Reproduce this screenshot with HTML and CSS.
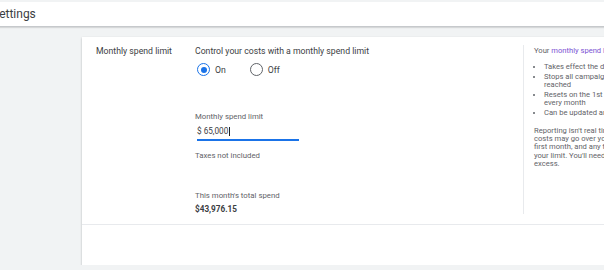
FILE: index.html
```html
<!DOCTYPE html>
<html lang="en">
<head>
    <meta charset="UTF-8">
    <meta name="viewport" content="width=device-width, initial-scale=1.0">
    <title>Settings</title>
    <link rel="stylesheet" href="styles.css">
</head>
<body>
    <header class="topbar">
        <h1 class="page-title">Settings</h1>
    </header>

    <main class="card">
        <section class="setting-row">
            <div class="setting-label">Monthly spend limit</div>

            <div class="setting-body">
                <p class="setting-desc">Control your costs with a monthly spend limit</p>

                <div class="radio-group">
                    <label class="radio-option"><span class="radio checked"></span>On</label>
                    <label class="radio-option"><span class="radio"></span>Off</label>
                </div>

                <div class="field">
                    <div class="field-label">Monthly spend limit</div>
                    <div class="field-input">$ 65,000<span class="caret"></span></div>
                </div>

                <p class="hint">Taxes not included</p>

                <div class="spend-label">This month's total spend</div>
                <div class="spend-value">$43,976.15</div>
            </div>

            <aside class="setting-help">
                <p class="help-title">Your <a class="help-link">monthly spend limit</a>:</p>
                <ul class="help-list">
                    <li>Takes effect the day you set it</li>
                    <li>Stops all campaigns when it's<br>reached</li>
                    <li>Resets on the 1st day of<br>every month</li>
                    <li>Can be updated anytime</li>
                </ul>
                <p class="help-note">Reporting isn't real time, so your<br>costs may go over your limit in your<br>first month, and any time you lower<br>your limit. You'll need to pay for the<br>excess.</p>
            </aside>
        </section>

        <section class="card-footer"></section>
    </main>
</body>
</html>
```

FILE: styles.css
```css
html, body {
    margin: 0;
    overflow: hidden;
}
body {
    background-color: #f1f3f4;
    padding-top: 2px;
    font-family: Roboto, "Liberation Sans", Arial, sans-serif;
    color: #3c4043;
}
.topbar {
    height: 24px;
    background-color: #fff;
    border-bottom: 1px solid #c6c9cc;
    box-shadow: 0 1px 1px rgba(60, 64, 67, 0.15);
}
.page-title {
    margin: 0 0 0 -8px;
    font-size: 12px;
    font-weight: 400;
    line-height: 24px;
    color: #3c4043;
}
.card {
    width: 640px;
    margin: 10px 0 0 82px;
    background-color: #fff;
    box-shadow: 0 1px 2px rgba(60, 64, 67, 0.35);
}
.setting-row {
    display: flex;
    padding: 8px 0 10px;
    border-bottom: 1px solid #e8eaed;
}
.setting-label {
    width: 99px;
    padding-left: 14px;
    font-size: 8.7px;
    line-height: 13px;
    color: #3c4043;
}
.setting-body {
    width: 328px;
}
.setting-desc {
    margin: 0;
    font-size: 8.7px;
    line-height: 13px;
    color: #3c4043;
}
.radio-group {
    display: flex;
    margin-top: 5px;
    height: 13px;
}
.radio-option {
    display: flex;
    align-items: center;
    gap: 5px;
    margin-left: 2px;
    margin-right: 22px;
    font-size: 8.7px;
    color: #3c4043;
}
.radio {
    box-sizing: border-box;
    width: 13px;
    height: 13px;
    border: 1.5px solid #5f6368;
    border-radius: 50%;
    display: flex;
    align-items: center;
    justify-content: center;
}
.radio.checked {
    border-color: #1a73e8;
}
.radio.checked::after {
    content: "";
    width: 6px;
    height: 6px;
    border-radius: 50%;
    background-color: #1a73e8;
}
.field {
    margin-top: 36px;
}
.field-label {
    font-size: 7.8px;
    line-height: 10px;
    color: #5f6368;
}
.field-input {
    width: 102px;
    margin: 4px 0 0 2px;
    padding-bottom: 3px;
    border-bottom: 2px solid #1a73e8;
    font-size: 8.2px;
    line-height: 10px;
    color: #3c4043;
    display: flex;
    align-items: center;
}
.caret {
    width: 1px;
    height: 9px;
    margin-left: 1px;
    background-color: #202124;
}
.hint {
    margin: 10px 0 0;
    font-size: 7.8px;
    line-height: 10px;
    color: #5f6368;
}
.spend-label {
    margin-top: 30px;
    font-size: 7.8px;
    line-height: 10px;
    color: #5f6368;
}
.spend-value {
    margin-top: 3px;
    font-size: 8.2px;
    font-weight: 700;
    line-height: 10px;
    color: #3c4043;
}
.setting-help {
    border-left: 1px solid #e8eaed;
    padding-left: 10px;
    width: 170px;
    font-size: 7.6px;
    line-height: 8.2px;
    color: #5f6368;
    white-space: nowrap;
}
.help-title {
    margin: 2px 0 0;
}
.help-link {
    color: #7b52d3;
}
.help-list {
    margin: 8px 0 0;
    padding-left: 10px;
}
.help-list li {
    margin-bottom: 1.5px;
}
.help-note {
    margin: 10px 0 0;
}
.card-footer {
    height: 40px;
}
```
